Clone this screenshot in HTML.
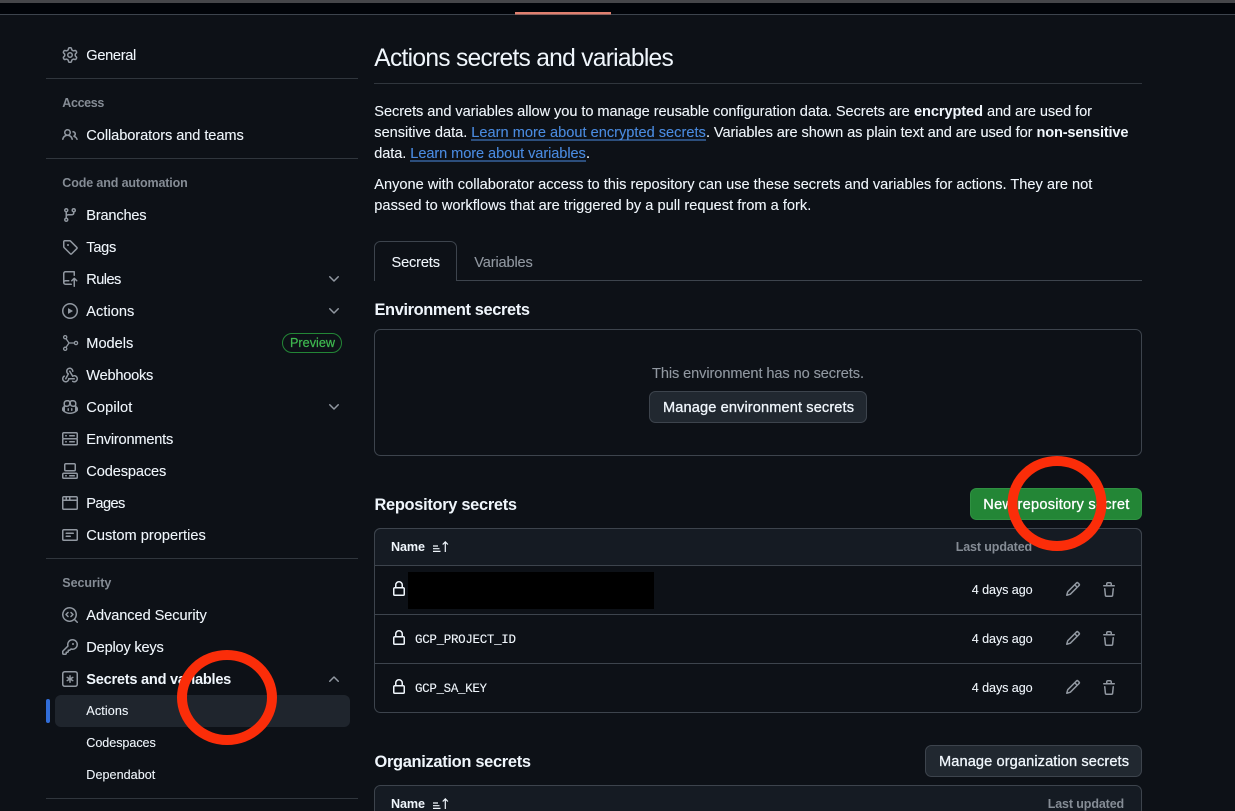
<!DOCTYPE html>
<html lang="en"><head><meta charset="utf-8"><title>Actions secrets and variables</title>
<style>
html,body{margin:0;padding:0;background:#0d1117;width:1235px;height:811px;overflow:hidden}
svg{display:block}
text{font-family:"Liberation Sans",Arial,sans-serif;font-size:14.6px;fill:#f0f6fc;stroke:#f0f6fc;stroke-width:.1}
.m{stroke:#f0f6fc;stroke-width:.3}
.h{font-size:12.5px;font-weight:700;fill:#858c95;stroke:none}
.s{font-size:12.6px}
.b{font-weight:700;stroke:none}
.mu{fill:#9198a1;stroke:#9198a1}
.l{fill:#4a8be0;stroke:#4a8be0}
.mono{font-family:"Liberation Mono",monospace;font-size:12.5px}
.i{fill:#9198a1}
.ln{stroke:#3d444d;stroke-width:1;fill:none}
</style></head><body>
<svg width="1235" height="811" viewBox="0 0 1235 811" xmlns="http://www.w3.org/2000/svg">
<defs>
<path id="chev" d="M12.78 5.22a.749.749 0 0 1 0 1.06l-4.25 4.25a.749.749 0 0 1-1.06 0L3.22 6.28a.749.749 0 1 1 1.06-1.06L8 8.939l3.72-3.719a.749.749 0 0 1 1.06 0Z"/>
<path id="lock" d="M4 4a4 4 0 0 1 8 0v2h.25c.966 0 1.75.784 1.75 1.75v5.5A1.75 1.75 0 0 1 12.25 15h-8.5A1.75 1.75 0 0 1 2 13.25v-5.5C2 6.784 2.784 6 3.75 6H4Zm8.25 3.5h-8.5a.25.25 0 0 0-.25.25v5.5c0 .138.112.25.25.25h8.5a.25.25 0 0 0 .25-.25v-5.5a.25.25 0 0 0-.25-.25ZM10.5 6V4a2.5 2.5 0 1 0-5 0v2Z"/>
<path id="pencil" d="M11.013 1.427a1.75 1.75 0 0 1 2.474 0l1.086 1.086a1.75 1.75 0 0 1 0 2.474l-8.61 8.61c-.21.21-.47.364-.756.445l-3.251.93a.75.75 0 0 1-.927-.928l.929-3.25c.081-.286.235-.547.445-.758l8.61-8.61Zm.176 4.823L9.75 4.81l-6.286 6.287a.253.253 0 0 0-.064.108l-.558 1.953 1.953-.558a.253.253 0 0 0 .108-.064Zm1.238-3.763a.25.25 0 0 0-.354 0L10.811 3.75l1.439 1.44 1.263-1.263a.25.25 0 0 0 0-.354Z"/>
<path id="trash" d="M11 1.75V3h2.25a.75.75 0 0 1 0 1.5H2.75a.75.75 0 0 1 0-1.5H5V1.75C5 .784 5.784 0 6.75 0h2.5C10.216 0 11 .784 11 1.75ZM4.496 6.675l.66 6.6a.25.25 0 0 0 .249.225h5.19a.25.25 0 0 0 .249-.225l.66-6.6a.75.75 0 0 1 1.492.149l-.66 6.6A1.748 1.748 0 0 1 10.595 15h-5.19a1.75 1.75 0 0 1-1.741-1.575l-.66-6.6a.75.75 0 1 1 1.492-.15ZM6.5 1.75V3h3V1.75a.25.25 0 0 0-.25-.25h-2.5a.25.25 0 0 0-.25.25Z"/>
<g id="sort" fill="none" stroke="#f0f6fc" stroke-width="1.2"><path d="M0 4.5h5M0 7.2h6.5M0 9.9h7.5"/><path d="M12.3 10.5V.3M9.7 3l2.6-2.6L14.9 3"/></g>
</defs>

<rect width="1235" height="811" fill="#0d1117"/>
<!-- top bar -->
<rect width="1235" height="3" fill="#45464a"/>
<rect y="3" width="1235" height="11" fill="#010409"/>
<rect y="14" width="1235" height="1" fill="#3d444d"/>
<rect x="515" y="12" width="96" height="2.5" fill="#e0806f"/>

<!-- sidebar separators -->
<g fill="#30363d"><rect x="46" y="78" width="312" height="1"/><rect x="46" y="158" width="312" height="1"/><rect x="46" y="558" width="312" height="1"/><rect x="46" y="798" width="312" height="1"/></g>

<!-- selected row -->
<rect x="55" y="695" width="295" height="32" rx="6" fill="#1f252d"/>
<rect x="46" y="699" width="4" height="24" rx="2" fill="#316dd8"/>

<!-- sidebar icons -->
<g class="i">
<path transform="translate(62 47)" d="M8 0a8.2 8.2 0 0 1 .701.031C9.444.095 9.99.645 10.16 1.29l.288 1.107c.018.066.079.158.212.224.231.114.454.243.668.386.123.082.233.09.299.071l1.103-.303c.644-.176 1.392.021 1.82.63.27.385.506.792.704 1.218.315.675.111 1.422-.364 1.891l-.814.806c-.049.048-.098.147-.088.294.016.257.016.515 0 .772-.01.147.038.246.088.294l.814.806c.475.469.679 1.216.364 1.891a7.977 7.977 0 0 1-.704 1.217c-.428.61-1.176.807-1.82.63l-1.102-.302c-.067-.019-.177-.011-.3.071a5.909 5.909 0 0 1-.668.386c-.133.066-.194.158-.211.224l-.29 1.106c-.168.646-.715 1.196-1.458 1.26a8.006 8.006 0 0 1-1.402 0c-.743-.064-1.289-.614-1.458-1.26l-.289-1.106c-.018-.066-.079-.158-.212-.224a5.738 5.738 0 0 1-.668-.386c-.123-.082-.233-.09-.299-.071l-1.103.303c-.644.176-1.392-.021-1.82-.63a8.12 8.12 0 0 1-.704-1.218c-.315-.675-.111-1.422.363-1.891l.815-.806c.05-.048.098-.147.088-.294a6.214 6.214 0 0 1 0-.772c.01-.147-.038-.246-.088-.294l-.815-.806C.635 6.045.431 5.298.746 4.623a7.92 7.92 0 0 1 .704-1.217c.428-.61 1.176-.807 1.82-.63l1.102.302c.067.019.177.011.3-.071.214-.143.437-.272.668-.386.133-.066.194-.158.211-.224l.29-1.106C6.009.645 6.556.095 7.299.03 7.53.01 7.764 0 8 0Zm-.571 1.525c-.036.003-.108.036-.137.146l-.289 1.105c-.147.561-.549.967-.998 1.189-.173.086-.34.183-.5.29-.417.278-.97.423-1.529.27l-1.103-.303c-.109-.03-.175.016-.195.045-.22.312-.412.644-.573.99-.014.031-.021.11.059.19l.815.806c.411.406.562.957.53 1.456a4.709 4.709 0 0 0 0 .582c.032.499-.119 1.05-.53 1.456l-.815.806c-.081.08-.073.159-.059.19.162.346.353.677.573.989.02.03.085.076.195.046l1.102-.303c.56-.153 1.113-.008 1.53.27.161.107.328.204.501.29.447.222.85.629.997 1.189l.289 1.105c.029.109.101.143.137.146a6.6 6.6 0 0 0 1.142 0c.036-.003.108-.036.137-.146l.289-1.105c.147-.561.549-.967.998-1.189.173-.086.34-.183.5-.29.417-.278.97-.423 1.529-.27l1.103.303c.109.029.175-.016.195-.045.22-.313.411-.644.573-.99.014-.031.021-.11-.059-.19l-.815-.806c-.411-.406-.562-.957-.53-1.456a4.709 4.709 0 0 0 0-.582c-.032-.499.119-1.05.53-1.456l.815-.806c.081-.08.073-.159.059-.19a6.464 6.464 0 0 0-.573-.989c-.02-.03-.085-.076-.195-.046l-1.102.303c-.56.153-1.113.008-1.53-.27a4.44 4.44 0 0 0-.501-.29c-.447-.222-.85-.629-.997-1.189l-.289-1.105c-.029-.11-.101-.143-.137-.146a6.6 6.6 0 0 0-1.142 0ZM11 8a3 3 0 1 1-6 0 3 3 0 0 1 6 0ZM9.5 8a1.5 1.5 0 1 0-3.001.001A1.5 1.5 0 0 0 9.5 8Z"/>
<path transform="translate(62 127)" d="M2 5.5a3.5 3.5 0 1 1 5.898 2.549 5.508 5.508 0 0 1 3.034 4.084.75.75 0 1 1-1.482.235 4 4 0 0 0-7.9 0 .75.75 0 0 1-1.482-.236A5.507 5.507 0 0 1 3.102 8.05 3.493 3.493 0 0 1 2 5.5ZM11 4a3.001 3.001 0 0 1 2.22 5.018 5.01 5.01 0 0 1 2.56 3.012.749.749 0 0 1-.885.954.752.752 0 0 1-.549-.514 3.507 3.507 0 0 0-2.522-2.372.75.75 0 0 1-.574-.73v-.352a.75.75 0 0 1 .416-.672A1.5 1.5 0 0 0 11 5.5.75.75 0 0 1 11 4Zm-5.5-.5a2 2 0 1 0-.001 3.999A2 2 0 0 0 5.5 3.5Z"/>
<path transform="translate(62 207)" d="M9.5 3.25a2.25 2.25 0 1 1 3 2.122V6A2.5 2.5 0 0 1 10 8.5H6a1 1 0 0 0-1 1v1.128a2.251 2.251 0 1 1-1.5 0V5.372a2.25 2.25 0 1 1 1.5 0v1.836A2.493 2.493 0 0 1 6 7h4a1 1 0 0 0 1-1v-.628A2.25 2.25 0 0 1 9.5 3.25Zm-6 0a.75.75 0 1 0 1.5 0 .75.75 0 0 0-1.5 0Zm8.25-.75a.75.75 0 1 0 0 1.5.75.75 0 0 0 0-1.5ZM4.25 12a.75.75 0 1 0 0 1.5.75.75 0 0 0 0-1.5Z"/>
<path transform="translate(62 239)" d="M1 7.775V2.75C1 1.784 1.784 1 2.75 1h5.025c.464 0 .91.184 1.238.513l6.25 6.25a1.75 1.75 0 0 1 0 2.474l-5.026 5.026a1.75 1.75 0 0 1-2.474 0l-6.25-6.25A1.752 1.752 0 0 1 1 7.775Zm1.5 0c0 .066.026.13.073.177l6.25 6.25a.25.25 0 0 0 .354 0l5.025-5.025a.25.25 0 0 0 0-.354l-6.25-6.25a.25.25 0 0 0-.177-.073H2.75a.25.25 0 0 0-.25.25ZM6 5a1 1 0 1 1 0 2 1 1 0 0 1 0-2Z"/>
<path transform="translate(62 271)" d="M1 2.5A2.5 2.5 0 0 1 3.5 0h8.75a.75.75 0 0 1 .75.75v3.5a.75.75 0 0 1-1.5 0V1.5h-8a1 1 0 0 0-1 1v6.708A2.493 2.493 0 0 1 3.5 9h3.25a.75.75 0 0 1 0 1.5H3.5a1 1 0 0 0 0 2h5.75a.75.75 0 0 1 0 1.5H3.5A2.5 2.5 0 0 1 1 11.5Zm13.23 7.79h-.001l-1.224-1.224v6.184a.75.75 0 0 1-1.5 0V9.066L10.28 10.29a.75.75 0 0 1-1.06-1.061l2.505-2.504a.75.75 0 0 1 1.06 0L15.29 9.23a.751.751 0 0 1-.018 1.042.751.751 0 0 1-1.042.018Z"/>
<path transform="translate(62 303)" d="M8 0a8 8 0 1 1 0 16A8 8 0 0 1 8 0ZM1.5 8a6.5 6.5 0 1 0 13 0 6.5 6.5 0 0 0-13 0Zm4.879-2.773 4.264 2.559a.25.25 0 0 1 0 .428l-4.264 2.559A.25.25 0 0 1 6 10.559V5.442a.25.25 0 0 1 .379-.215Z"/>
<g transform="translate(62 335)" fill="none" stroke="#9198a1" stroke-width="1.3"><circle cx="3.2" cy="2.2" r="1.6"/><circle cx="3.2" cy="13.8" r="1.6"/><circle cx="14" cy="8" r="1.6"/><path d="M4 3.6 7 8 4 12.4M7 8h5.4"/></g>
<path transform="translate(62 367)" d="M5.5 4.25a2.25 2.25 0 0 1 4.5 0 .75.75 0 0 0 1.5 0 3.75 3.75 0 1 0-6.14 2.889l-2.272 4.258a.75.75 0 0 0 1.324.706L7 7.25a.75.75 0 0 0-.309-1.015A2.25 2.25 0 0 1 5.5 4.25Z"/>
<path transform="translate(62 367)" d="M7.364 3.607a.75.75 0 0 1 1.03.257l2.608 4.349a3.75 3.75 0 1 1-.628 6.785.75.75 0 0 1 .752-1.299 2.25 2.25 0 1 0-.033-3.88.75.75 0 0 1-1.03-.256L7.107 4.636a.75.75 0 0 1 .257-1.03Z"/>
<path transform="translate(62 367)" d="M2.9 8.776A.75.75 0 0 1 2.625 9.8 2.25 2.25 0 1 0 6 11.75a.75.75 0 0 1 .75-.751h5.5a.75.75 0 0 1 0 1.5H7.425a3.751 3.751 0 1 1-5.55-3.998.75.75 0 0 1 1.024.274Z"/>
<path transform="translate(62 399)" d="M7.998 15.035c-4.562 0-7.873-2.914-7.998-3.749V9.338c.085-.628.677-1.686 1.588-2.065.013-.07.024-.143.036-.218.029-.183.06-.384.126-.612-.201-.508-.254-1.084-.254-1.656 0-.87.128-1.769.693-2.484.579-.733 1.494-1.124 2.724-1.261 1.206-.134 2.262.034 2.944.765.05.053.096.108.139.165.044-.057.094-.112.143-.165.682-.731 1.738-.899 2.944-.765 1.23.137 2.145.528 2.724 1.261.566.715.693 1.614.693 2.484 0 .572-.053 1.148-.254 1.656.066.228.098.429.126.612.012.076.024.148.037.218.924.385 1.522 1.471 1.591 2.095v1.872c0 .766-3.351 3.795-8.002 3.795Zm0-1.485c2.28 0 4.584-1.11 5.002-1.433V7.862l-.023-.116c-.49.21-1.075.291-1.727.291-1.146 0-2.059-.327-2.71-.991A3.222 3.222 0 0 1 8 6.303a3.24 3.24 0 0 1-.544.743c-.65.664-1.563.991-2.71.991-.652 0-1.236-.081-1.727-.291l-.023.116v4.255c.419.323 2.722 1.433 5.002 1.433ZM6.762 2.83c-.193-.206-.637-.413-1.682-.297-1.019.113-1.479.404-1.713.7-.247.312-.369.789-.369 1.554 0 .793.129 1.171.308 1.371.162.181.519.379 1.442.379.853 0 1.339-.235 1.638-.54.315-.322.527-.827.617-1.553.117-.935-.037-1.395-.241-1.614Zm4.155-.297c-1.044-.116-1.488.091-1.681.297-.204.219-.359.679-.242 1.614.091.726.303 1.231.618 1.553.299.305.784.54 1.638.54.922 0 1.28-.198 1.442-.379.179-.2.308-.578.308-1.371 0-.765-.123-1.242-.37-1.554-.233-.296-.693-.587-1.713-.7Z"/>
<path transform="translate(62 399)" d="M6.25 9.037a.75.75 0 0 1 .75.75v1.501a.75.75 0 0 1-1.5 0V9.787a.75.75 0 0 1 .75-.75Zm4.25.75v1.501a.75.75 0 0 1-1.5 0V9.787a.75.75 0 0 1 1.5 0Z"/>
<path transform="translate(62 431)" d="M1.75 1h12.5c.966 0 1.75.784 1.75 1.75v4c0 .372-.116.717-.314 1 .198.283.314.628.314 1v4a1.75 1.75 0 0 1-1.75 1.75H1.75A1.75 1.75 0 0 1 0 12.75v-4c0-.358.109-.707.314-1a1.739 1.739 0 0 1-.314-1v-4C0 1.784.784 1 1.75 1ZM1.5 2.75v4c0 .138.112.25.25.25h12.5a.25.25 0 0 0 .25-.25v-4a.25.25 0 0 0-.25-.25H1.75a.25.25 0 0 0-.25.25Zm.25 5.75a.25.25 0 0 0-.25.25v4c0 .138.112.25.25.25h12.5a.25.25 0 0 0 .25-.25v-4a.25.25 0 0 0-.25-.25ZM7 4.75A.75.75 0 0 1 7.75 4h4.5a.75.75 0 0 1 0 1.5h-4.5A.75.75 0 0 1 7 4.75ZM7.75 10h4.5a.75.75 0 0 1 0 1.5h-4.5a.75.75 0 0 1 0-1.5ZM3 4.75A.75.75 0 0 1 3.75 4h.5a.75.75 0 0 1 0 1.5h-.5A.75.75 0 0 1 3 4.75ZM3.75 10h.5a.75.75 0 0 1 0 1.5h-.5a.75.75 0 0 1 0-1.5Z"/>
<path transform="translate(62 463)" d="M0 11.25c0-.966.784-1.75 1.75-1.75h12.5c.966 0 1.75.784 1.75 1.75v3A1.75 1.75 0 0 1 14.25 16H1.75A1.75 1.75 0 0 1 0 14.25Zm2-9.5C2 .784 2.784 0 3.75 0h8.5C13.216 0 14 .784 14 1.75v5a1.75 1.75 0 0 1-1.75 1.75h-8.5A1.75 1.75 0 0 1 2 6.75Zm1.75-.25a.25.25 0 0 0-.25.25v5c0 .138.112.25.25.25h8.5a.25.25 0 0 0 .25-.25v-5a.25.25 0 0 0-.25-.25Zm-2 9.5a.25.25 0 0 0-.25.25v3c0 .138.112.25.25.25h12.5a.25.25 0 0 0 .25-.25v-3a.25.25 0 0 0-.25-.25Z"/>
<path transform="translate(62 463)" d="M7 12.75a.75.75 0 0 1 .75-.75h4.5a.75.75 0 0 1 0 1.5h-4.5a.75.75 0 0 1-.75-.75Zm-4 0a.75.75 0 0 1 .75-.75h.5a.75.75 0 0 1 0 1.5h-.5a.75.75 0 0 1-.75-.75Z"/>
<path transform="translate(62 495)" d="M0 2.75C0 1.784.784 1 1.75 1h12.5c.966 0 1.75.784 1.75 1.75v10.5A1.75 1.75 0 0 1 14.25 15H1.75A1.75 1.75 0 0 1 0 13.25ZM14.5 6h-13v7.25c0 .138.112.25.25.25h12.5a.25.25 0 0 0 .25-.25Zm-6-3.5v2h6V2.75a.25.25 0 0 0-.25-.25ZM5 2.5v2h2v-2Zm-3.25 0a.25.25 0 0 0-.25.25V4.5h2v-2Z"/>
<path transform="translate(62 527)" d="M0 3.75C0 2.784.784 2 1.75 2h12.5c.966 0 1.75.784 1.75 1.75v8.5A1.75 1.75 0 0 1 14.25 14H1.75A1.75 1.75 0 0 1 0 12.25Zm1.75-.25a.25.25 0 0 0-.25.25v8.5c0 .138.112.25.25.25h12.5a.25.25 0 0 0 .25-.25v-8.5a.25.25 0 0 0-.25-.25ZM3.5 6.25a.75.75 0 0 1 .75-.75h7a.75.75 0 0 1 0 1.5h-7a.75.75 0 0 1-.75-.75Zm.75 2.25h4a.75.75 0 0 1 0 1.5h-4a.75.75 0 0 1 0-1.5Z"/>
<path transform="translate(62 607)" d="M8.47 4.97a.75.75 0 0 0 0 1.06L9.94 7.5 8.47 8.97a.75.75 0 1 0 1.06 1.06l2-2a.75.75 0 0 0 0-1.06l-2-2a.75.75 0 0 0-1.06 0ZM6.53 6.03a.75.75 0 0 0-1.06-1.06l-2 2a.75.75 0 0 0 0 1.06l2 2a.75.75 0 1 0 1.06-1.06L5.06 7.5l1.47-1.47Z"/>
<path transform="translate(62 607)" d="M12.246 13.307a7.501 7.501 0 1 1 1.06-1.06l2.474 2.473a.749.749 0 0 1-.326 1.275.749.749 0 0 1-.734-.215ZM1.5 7.5a6.002 6.002 0 0 0 3.608 5.504 6.002 6.002 0 0 0 6.486-1.117.748.748 0 0 1 .292-.293A6 6 0 1 0 1.5 7.5Z"/>
<path transform="translate(62 639)" d="M10.5 0a5.499 5.499 0 1 1-1.288 10.848l-.932.932a.749.749 0 0 1-.53.22H7v.75a.749.749 0 0 1-.22.53l-.5.5a.749.749 0 0 1-.53.22H5v.75a.749.749 0 0 1-.22.53l-.5.5a.749.749 0 0 1-.53.22h-2A1.75 1.75 0 0 1 0 14.25v-2c0-.199.079-.389.22-.53l4.932-4.932A5.5 5.5 0 0 1 10.5 0Zm-4 5.5c-.001.431.069.86.205 1.269a.75.75 0 0 1-.181.768L1.5 12.56v1.69c0 .138.112.25.25.25h1.69l.06-.06v-1.19a.75.75 0 0 1 .75-.75h1.19l.06-.06v-1.19a.75.75 0 0 1 .75-.75h1.19l1.023-1.025a.75.75 0 0 1 .768-.18A4 4 0 1 0 6.5 5.5ZM11 6a1 1 0 1 1 0-2 1 1 0 0 1 0 2Z"/>
<path transform="translate(62 671)" d="M0 2.75A2.75 2.75 0 0 1 2.75 0h10.5A2.75 2.75 0 0 1 16 2.75v10.5A2.75 2.75 0 0 1 13.25 16H2.75A2.75 2.75 0 0 1 0 13.25ZM2.75 1.5c-.69 0-1.25.56-1.25 1.25v10.5c0 .69.56 1.25 1.25 1.25h10.5c.69 0 1.25-.56 1.25-1.25V2.75c0-.69-.56-1.25-1.25-1.25Z"/>
<path transform="translate(62 671)" d="M8 4a.75.75 0 0 1 .75.75V6.7l1.69-.975a.75.75 0 0 1 .75 1.3L9.5 8l1.69.976a.75.75 0 0 1-.75 1.298L8.75 9.3v1.951a.75.75 0 0 1-1.5 0V9.299l-1.69.976a.75.75 0 0 1-.75-1.3L6.5 8l-1.69-.975a.75.75 0 0 1 .75-1.3l1.69.976V4.75A.75.75 0 0 1 8 4Z"/>
<use href="#chev" transform="translate(326 271)"/>
<use href="#chev" transform="translate(326 303)"/>
<use href="#chev" transform="translate(326 399)"/>
<use href="#chev" transform="translate(326 687) scale(1 -1)"/>
</g>

<!-- sidebar text -->
<text x="86.3" y="60" textLength="50">General</text>
<text x="62.3" y="107" class="h" textLength="42">Access</text>
<text x="86.3" y="140" textLength="157.5">Collaborators and teams</text>
<text x="62.3" y="187" class="h" textLength="125.5">Code and automation</text>
<text x="86.3" y="220" textLength="60.3">Branches</text>
<text x="86.3" y="252" textLength="30">Tags</text>
<text x="86.3" y="284" textLength="35">Rules</text>
<text x="86.3" y="316" textLength="48">Actions</text>
<text x="86.3" y="348" textLength="47">Models</text>
<text x="86.3" y="380" textLength="67">Webhooks</text>
<text x="86.3" y="412" textLength="46">Copilot</text>
<text x="86.3" y="444" textLength="87">Environments</text>
<text x="86.3" y="476" textLength="80">Codespaces</text>
<text x="86.3" y="508" textLength="39">Pages</text>
<text x="86.3" y="540" textLength="119.5">Custom properties</text>
<text x="62.3" y="587" class="h" textLength="49">Security</text>
<text x="86.3" y="620" textLength="120.5">Advanced Security</text>
<text x="86.3" y="652" textLength="77.5">Deploy keys</text>
<text x="86.3" y="684" class="b" textLength="145">Secrets and variables</text>
<text x="86.3" y="715" class="s" textLength="42">Actions</text>
<text x="86.3" y="747" class="s" textLength="69.5">Codespaces</text>
<text x="86.3" y="779" class="s" textLength="69">Dependabot</text>

<!-- preview pill -->
<rect x="282.5" y="333.5" width="59" height="19" rx="9.5" fill="none" stroke="#238636"/>
<text x="290" y="347" class="s" style="fill:#3fb950;stroke:#3fb950;stroke-width:.2" textLength="45">Preview</text>

<!-- heading -->
<text x="374.3" y="66" style="font-size:24.6px;stroke:none" textLength="299.5">Actions secrets and variables</text>
<rect x="374" y="83" width="768" height="1" fill="#30363d"/>

<!-- paragraph -->
<text x="374.3" y="116" textLength="535.5">Secrets and variables allow you to manage reusable configuration data. Secrets are</text>
<text x="914" y="116" class="b" textLength="69">encrypted</text>
<text x="987" y="116" textLength="105">and are used for</text>
<text x="374.3" y="137" textLength="93">sensitive data.</text>
<text x="471.3" y="137" class="l" textLength="234.5">Learn more about encrypted secrets</text>
<rect x="471" y="139.5" width="235" height="1" fill="#4a8be0"/>
<text x="706" y="137" textLength="326.5">. Variables are shown as plain text and are used for</text>
<text x="1036.5" y="137" class="b" textLength="92">non-sensitive</text>
<text x="374.3" y="158" textLength="32">data.</text>
<text x="410.3" y="158" class="l" textLength="175.5">Learn more about variables</text>
<rect x="410" y="160.5" width="176" height="1" fill="#4a8be0"/>
<text x="586" y="158">.</text>
<text x="374.3" y="189" textLength="718">Anyone with collaborator access to this repository can use these secrets and variables for actions. They are not</text>
<text x="374.3" y="210" textLength="437">passed to workflows that are triggered by a pull request from a fork.</text>

<!-- tabs -->
<path class="ln" d="M374.5 281V247.5a6 6 0 0 1 6-6H450.5a6 6 0 0 1 6 6V280.5H1142"/>
<text x="391.5" y="267" textLength="48.5">Secrets</text>
<text x="474.3" y="267" class="mu" textLength="58.5">Variables</text>

<!-- environment secrets -->
<text x="374.5" y="315" class="b" style="font-size:16.4px" textLength="155.5">Environment secrets</text>
<rect x="374.5" y="329.5" width="767" height="126" rx="6" class="ln"/>
<text x="652" y="378" class="mu" textLength="212">This environment has no secrets.</text>
<rect x="649.5" y="391.5" width="217" height="31" rx="6" fill="#212830" stroke="#3d444d"/>
<text x="663" y="412" class="m" textLength="191">Manage environment secrets</text>

<!-- repository secrets -->
<text x="374.5" y="510" class="b" style="font-size:16.4px" textLength="142.5">Repository secrets</text>
<rect x="970.5" y="488.5" width="171" height="31" rx="6" fill="#238636" stroke="#2f9142"/>
<text x="983.3" y="509" style="fill:#fff;stroke:#fff;stroke-width:.3" textLength="146">New repository secret</text>

<path d="M380.5 528.5H1135.5a6 6 0 0 1 6 6V565.5H374.5V534.5a6 6 0 0 1 6-6Z" fill="#151b23" stroke="#3d444d"/>
<rect x="374.5" y="528.5" width="767" height="184" rx="6" class="ln"/>
<rect x="375" y="614" width="766" height="1" fill="#3d444d"/>
<rect x="375" y="663" width="766" height="1" fill="#3d444d"/>
<text x="391" y="551" class="s b" textLength="34">Name</text>
<use href="#sort" transform="translate(433 541.5)"/>
<text x="955.7" y="551" class="h" textLength="76.5">Last updated</text>

<g fill="#f0f6fc">
<use href="#lock" transform="translate(391 581)"/>
<use href="#lock" transform="translate(391 630)"/>
<use href="#lock" transform="translate(391 679)"/>
</g>
<rect x="408" y="572" width="246" height="37" fill="#000"/>
<text x="415" y="643" class="mono" textLength="101">GCP_PROJECT_ID</text>
<text x="415" y="692" class="mono" textLength="72">GCP_SA_KEY</text>
<text x="971.7" y="594" class="s" textLength="61">4 days ago</text>
<text x="971.7" y="643" class="s" textLength="61">4 days ago</text>
<text x="971.7" y="692" class="s" textLength="61">4 days ago</text>
<g class="i">
<use href="#pencil" transform="translate(1065 581)"/>
<use href="#trash" transform="translate(1101 582)"/>
<use href="#pencil" transform="translate(1065 630)"/>
<use href="#trash" transform="translate(1101 631)"/>
<use href="#pencil" transform="translate(1065 679)"/>
<use href="#trash" transform="translate(1101 680)"/>
</g>

<!-- organization secrets -->
<text x="374.5" y="767" class="b" style="font-size:16.4px" textLength="156.5">Organization secrets</text>
<rect x="925.5" y="745.5" width="216" height="31" rx="6" fill="#212830" stroke="#3d444d"/>
<text x="939" y="766" class="m" textLength="190">Manage organization secrets</text>
<path d="M374.5 820V791.5a6 6 0 0 1 6-6H1135.5a6 6 0 0 1 6 6V820Z" fill="#151b23" stroke="#3d444d"/>
<text x="391" y="808" class="s b" textLength="34">Name</text>
<use href="#sort" transform="translate(433 798.5)"/>
<text x="1047.7" y="808" class="h" textLength="76.5">Last updated</text>

<!-- red annotation circles -->
<ellipse cx="227" cy="697.5" rx="45" ry="42.5" fill="none" stroke="#fb2d09" stroke-width="10"/>
<ellipse cx="1057" cy="503.5" rx="44.5" ry="42.5" fill="none" stroke="#fb2d09" stroke-width="10"/>
</svg>
</body></html>
